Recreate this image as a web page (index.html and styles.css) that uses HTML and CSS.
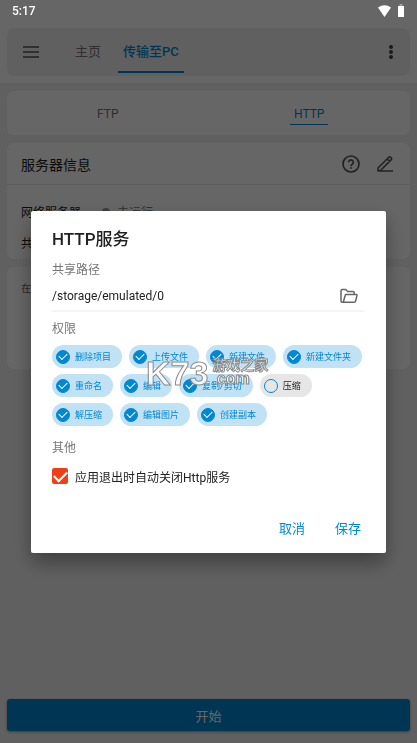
FILE: index.html
```html
<!DOCTYPE html>
<html lang="zh-CN">
<head>
<meta charset="utf-8">
<meta name="viewport" content="width=device-width, initial-scale=1">
<title>HTTP服务</title>
<link rel="stylesheet" href="styles.css">
</head>
<body>
<div class="status">
  <span>5:17</span>
  <svg class="status-icons" width="28" height="14" viewBox="0 0 28 14" aria-hidden="true">
    <path d="M1 3.4Q7.500-1 14 3.400L7.500 13Z" fill="#fff"/>
    <path d="M22.500 0h3v2h-3z" fill="#a0a0a0"/>
    <path d="M21 2h6v11h-6z" fill="#fff"/>
  </svg>
</div>

<div class="page">
  <header class="top">
    <div class="toolbar">
      <button class="icon-btn" aria-label="菜单">
        <svg width="16" height="14" viewBox="0 0 16 14"><path d="M0 2h16M0 7h16M0 12h16" stroke="#555" stroke-width="1.700"/></svg>
      </button>
      <nav class="tabs">
        <a class="tab" href="#home">主页</a>
        <a class="tab active" href="#pc">传输至PC</a>
      </nav>
      <button class="icon-btn more" aria-label="更多">
        <svg width="6" height="16" viewBox="0 0 6 16" fill="#444"><circle cx="3" cy="3" r="2"/><circle cx="3" cy="8" r="2"/><circle cx="3" cy="13" r="2"/></svg>
      </button>
    </div>
  </header>

  <main class="content">
    <nav class="card modes">
      <div class="mode"><a href="#ftp">FTP</a></div>
      <div class="mode"><a class="active" href="#http">HTTP</a></div>
    </nav>

    <section class="card">
      <div class="card-head">
        <h2>服务器信息</h2>
        <button class="icon-btn" aria-label="帮助">
          <svg width="18" height="18" viewBox="0 0 18 18" fill="none" stroke="#555" stroke-width="1.700"><circle cx="9" cy="9" r="8"/><path d="M6.700 7.300a2.300 2.300 0 1 1 3.700 1.800C9.500 9.800 9 10 9 11.200"/><path d="M9 12.200v1.500"/></svg>
        </button>
        <button class="icon-btn" aria-label="编辑">
          <svg width="16" height="18" viewBox="0 0 16 18" fill="none" stroke="#555" stroke-width="1.600" stroke-linejoin="round"><path d="M1 16v-3L11.800 2.200Q12.800 1.500 13.600 2.300l.6.6q.8.8 0 1.700L3.800 15.300 2 16zM10.200 4l2.500 2.500M1 16h15"/></svg>
        </button>
      </div>
      <div class="rows">
        <div class="row"><span>网络服务器</span><i class="dot"></i><span class="muted">未运行</span></div>
        <div class="row"><span>共</span></div>
      </div>
    </section>

    <section class="card devices">在</section>

    <button class="start">开始</button>
  </main>
</div>

<div class="scrim">
  <form class="dialog" role="dialog" aria-labelledby="dialog-title">
    <h1 id="dialog-title">HTTP服务</h1>

    <label class="caption" for="path">共享路径</label>
    <div class="field">
      <input id="path" type="text" value="/storage/emulated/0">
      <button type="button" class="icon-btn" aria-label="选择文件夹">
        <svg width="18" height="16" viewBox="0 0 18 16" fill="none" stroke="#666" stroke-width="1.500" stroke-linejoin="round"><path d="M3.500 14.200H2.200Q1 14.200 1 13V2.700Q1 1.500 2.200 1.500H5.800L7.600 3.400H13Q14.200 3.400 14.200 4.600V6.400"/><path d="M3.300 14.200 5.200 7.300Q5.400 6.500 6.300 6.500H16.300Q17.200 6.500 17 7.400L15.500 13.300Q15.300 14.200 14.300 14.200Z"/></svg>
      </button>
    </div>

    <p class="caption">权限</p>
    <div class="chips">
      <label class="chip"><input type="checkbox" checked>删除项目</label>
      <label class="chip"><input type="checkbox" checked>上传文件</label>
      <label class="chip"><input type="checkbox" checked>新建文件</label>
      <label class="chip"><input type="checkbox" checked>新建文件夹</label>
      <label class="chip"><input type="checkbox" checked>重命名</label>
      <label class="chip"><input type="checkbox" checked>编辑</label>
      <label class="chip"><input type="checkbox" checked>复制/剪切</label>
      <label class="chip off"><input type="checkbox">压缩</label>
      <label class="chip"><input type="checkbox" checked>解压缩</label>
      <label class="chip"><input type="checkbox" checked>编辑图片</label>
      <label class="chip"><input type="checkbox" checked>创建副本</label>
      <div class="watermark">
        <span class="mark-logo">K73</span>
        <span class="mark-text"><span class="mark-name">游戏之家</span><span class="mark-domain">.com</span></span>
      </div>
    </div>

    <p class="caption">其他</p>
    <label class="option"><input type="checkbox" checked>应用退出时自动关闭Http服务</label>

    <div class="actions">
      <button type="button">取消</button>
      <button type="button">保存</button>
    </div>
  </form>
</div>
</body>
</html>
```

FILE: styles.css
```css
:root {
  --primary: #0288d1;
  --surface: #f1f1f1;
}

* {
  box-sizing: border-box;
}

body,
h1,
h2,
p {
  margin: 0;
}

body {
  font-family: Roboto, "Noto Sans CJK SC", sans-serif;
  font-size: 12px;
  color: #222;
  background: var(--surface);
}

button,
input {
  font: inherit;
  color: inherit;
  margin: 0;
  padding: 0;
  border: 0;
  background: none;
}

a {
  color: #777;
  text-decoration: none;
}

svg {
  display: block;
}

.status {
  position: absolute;
  z-index: 3;
  top: 0;
  left: 0;
  right: 0;
  height: 22px;
  padding: 0 12px;
  display: flex;
  align-items: center;
  justify-content: space-between;
  color: #fff;
  font-weight: 500;
}

.page {
  min-height: 100vh;
  display: flex;
  flex-direction: column;
}

.top {
  padding: 28px 7px 7px;
  background: #fff;
}

.toolbar {
  height: 48px;
  padding: 0 16px;
  display: flex;
  align-items: center;
  background: var(--surface);
  border-radius: 7px;
}

.tabs {
  display: flex;
  align-self: stretch;
  gap: 12px;
  margin-left: 31px;
}

.tab {
  height: 45px;
  padding: 0 5px;
  line-height: 48px;
  font-size: 13px;
}

.tab.active {
  color: var(--primary);
  font-weight: 500;
  border-bottom: 2px solid var(--primary);
}

.more {
  margin-left: auto;
}

.content {
  flex: 1;
  padding: 8px 7px 12px;
  display: flex;
  flex-direction: column;
  gap: 8px;
}

.card {
  background: #fff;
  border-radius: 7px;
}

.modes {
  height: 44px;
  display: flex;
}

.mode {
  flex: 1;
  display: flex;
  align-items: center;
  justify-content: center;
}

.mode a {
  padding: 4px 4px 2px;
  line-height: 16px;
  border-bottom: 1px solid transparent;
}

.mode .active {
  color: var(--primary);
  border-color: var(--primary);
}

.card-head {
  height: 42px;
  padding: 0 17px 0 14px;
  display: flex;
  align-items: center;
  gap: 17px;
  border-bottom: 1px solid #ececec;
}

.card-head h2 {
  flex: 1;
  font-size: 14px;
  font-weight: 400;
}

.rows {
  padding: 11px 14px 1px;
}

.row {
  height: 31px;
  display: flex;
  align-items: center;
}

.dot {
  width: 8px;
  height: 8px;
  margin: 0 7px 0 21px;
  border-radius: 50%;
  background: #999;
}

.muted {
  color: #777;
}

.devices {
  min-height: 102px;
  padding: 14px;
  font-size: 10px;
  line-height: 16px;
  color: #666;
}

.start {
  height: 32px;
  margin-top: auto;
  border-radius: 3px;
  background: var(--primary);
  color: #fff;
  font-size: 13px;
  box-shadow: 0 1px 3px rgba(0, 0, 0, 0.4);
}

.scrim {
  position: fixed;
  z-index: 2;
  inset: 0;
  padding: 21px 31px 0;
  display: flex;
  align-items: center;
  background: rgba(0, 0, 0, 0.6);
}

.dialog {
  flex: 1;
  min-width: 0;
  padding: 14px 22px 12px 21px;
  background: #fff;
  border-radius: 2px;
  box-shadow: 0 10px 20px rgba(0, 0, 0, 0.35);
}

.dialog h1 {
  margin-bottom: 9px;
  font-size: 17px;
  font-weight: 500;
  line-height: 28px;
}

.caption {
  display: block;
  line-height: 16px;
  color: #777;
}

.field {
  height: 30px;
  margin: 4px 0 9px;
  padding-right: 6px;
  display: flex;
  align-items: center;
  border-bottom: 2px solid #f5f5f5;
}

.field input {
  flex: 1;
  min-width: 0;
}

.chips {
  position: relative;
  margin: 8px 0 14px;
  display: flex;
  flex-wrap: wrap;
  gap: 6px 7px;
}

.chip {
  height: 23px;
  padding: 0 11px 0 4px;
  display: flex;
  align-items: center;
  gap: 5px;
  border-radius: 12px;
  background: #c1e1f4;
  color: var(--primary);
  font-size: 9px;
}

.chip.off {
  background: #e6e6e6;
  color: #222;
}

.chip input {
  appearance: none;
  width: 14px;
  height: 14px;
  display: grid;
  place-items: center;
  border: 1px solid var(--primary);
  border-radius: 50%;
}

.chip input:checked {
  background: var(--primary);
}

.chip input:checked::after {
  content: "";
  width: 7px;
  height: 4px;
  margin-bottom: 2px;
  border: solid #fff;
  border-width: 0 0 1px 1px;
  transform: rotate(-45deg);
}

.watermark {
  position: absolute;
  top: 13px;
  left: 94px;
  display: flex;
  gap: 4px;
  color: rgba(255, 255, 255, 0.8);
  font-family: "Liberation Sans", "Noto Sans CJK SC", sans-serif;
  font-weight: 700;
  -webkit-text-stroke: 1px #8a8a8a;
  pointer-events: none;
}

.mark-logo {
  font-size: 34px;
  line-height: 30px;
}

.mark-text {
  display: flex;
  flex-direction: column;
}

.mark-name {
  font-size: 14px;
  line-height: 14px;
}

.mark-domain {
  font-size: 16px;
  line-height: 14px;
}

.option {
  height: 20px;
  margin-top: 10px;
  display: flex;
  align-items: center;
  gap: 7px;
}

.option input {
  appearance: none;
  width: 16px;
  height: 16px;
  display: grid;
  place-items: center;
  border-radius: 2px;
  background: #ef3f16;
}

.option input:checked::after {
  content: "";
  width: 11px;
  height: 6px;
  margin-bottom: 3px;
  border: solid #fff;
  border-width: 0 0 2px 2px;
  transform: rotate(-45deg);
}

.actions {
  margin-top: 31px;
  padding-right: 3px;
  display: flex;
  justify-content: flex-end;
  gap: 30px;
}

.actions button {
  font-size: 13px;
  line-height: 24px;
  color: var(--primary);
}
```
